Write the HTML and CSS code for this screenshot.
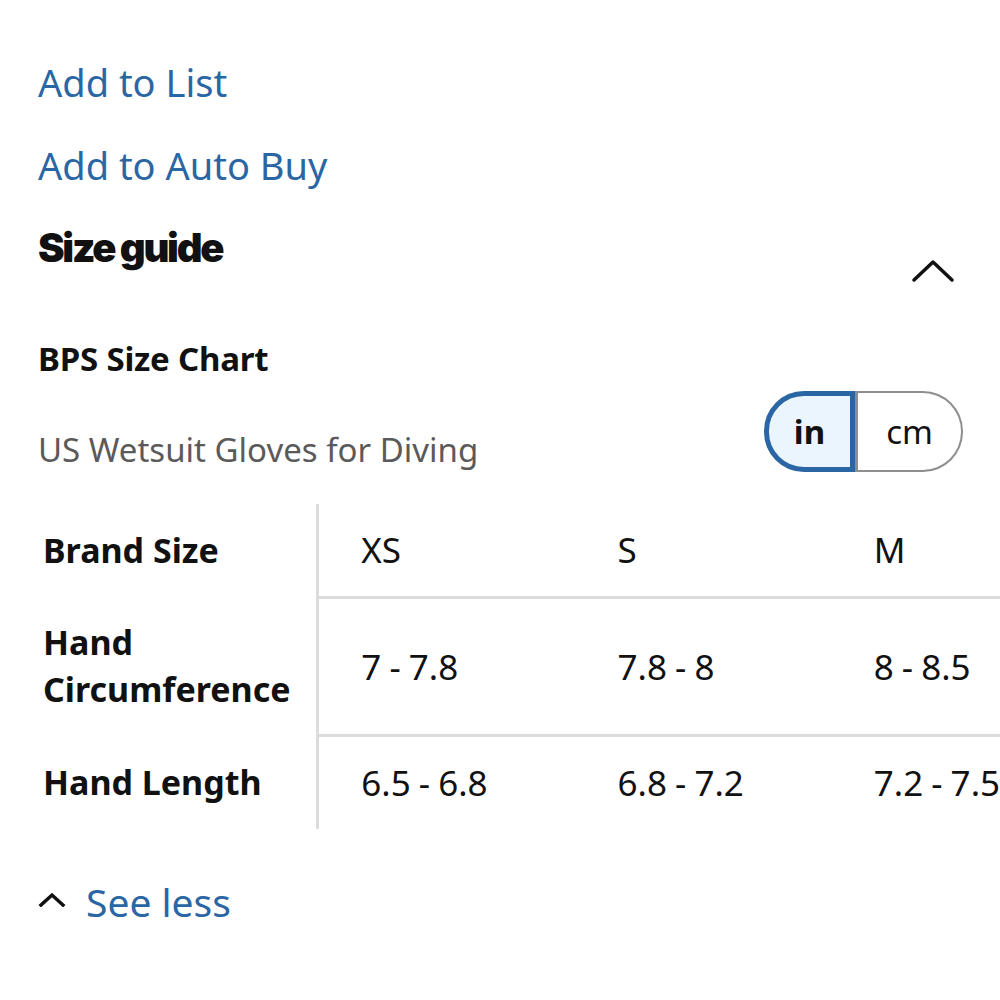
FILE: index.html
```html
<!DOCTYPE html>
<html lang="en">
<head>
<meta charset="utf-8">
<title>Size guide</title>
<link rel="stylesheet" href="styles.css">
</head>
<body>
<main class="page">
  <div class="actions">
    <a class="link" href="#">Add to List</a>
    <a class="link" href="#">Add to Auto Buy</a>
  </div>
  <section class="guide">
    <div class="guide-head">
      <h2 class="guide-title">Size guide</h2>
      <svg class="chev-up" viewBox="0 0 44 26" width="44" height="26" aria-hidden="true"><path d="M3 23 L22 5 L41 23" fill="none" stroke="#111" stroke-width="3.5" stroke-linecap="round" stroke-linejoin="round"/></svg>
    </div>
    <h3 class="chart-title">BPS Size Chart</h3>
    <div class="sub-row">
      <p class="chart-sub">US Wetsuit Gloves for Diving</p>
      <div class="toggle">
        <button class="tg tg-on">in</button>
        <button class="tg tg-off">cm</button>
      </div>
    </div>
    <div class="table-wrap">
      <table class="sizes">
        <tbody>
          <tr class="r1">
            <th>Brand Size</th>
            <td>XS</td><td>S</td><td>M</td>
          </tr>
          <tr class="r2">
            <th>Hand<br>Circumference</th>
            <td>7 - 7.8</td><td>7.8 - 8</td><td>8 - 8.5</td>
          </tr>
          <tr class="r3">
            <th>Hand Length</th>
            <td>6.5 - 6.8</td><td>6.8 - 7.2</td><td>7.2 - 7.5</td>
          </tr>
        </tbody>
      </table>
    </div>
    <a class="see-less" href="#">
      <svg class="chev-small" viewBox="0 0 28 16" width="28" height="16" aria-hidden="true"><path d="M3 14 L14 4 L25 14" fill="none" stroke="#111" stroke-width="3.5" stroke-linecap="square"/></svg>
      <span>See less</span>
    </a>
  </section>
</main>
</body>
</html>
```

FILE: styles.css
```css
html, body {
  margin: 0;
  padding: 0;
  background: #fff;
}
body {
  font-family: "Noto Sans", "Open Sans", sans-serif;
  color: #111;
  width: 1000px;
  overflow: hidden;
}
.page {
  padding: 57px 37px 0 38px;
}
.actions {
  display: flex;
  flex-direction: column;
  gap: 33px;
}
.link {
  color: #2a66a3;
  text-decoration: none;
  font-size: 38px;
  line-height: 50px;
  align-self: flex-start;
}
.guide-head {
  display: flex;
  justify-content: space-between;
  align-items: flex-start;
  margin-top: 33px;
}
.guide-title {
  margin: 0;
  font-family: "Inter", sans-serif;
  font-weight: 900;
  font-size: 40px;
  letter-spacing: -2.3px;
  line-height: 50px;
}
.chev-up {
  margin-top: 34px;
  margin-right: 8px;
}
.chart-title {
  margin: 54px 0 0;
  font-size: 33px;
  font-weight: 700;
  line-height: 44px;
  letter-spacing: -0.2px;
}
.sub-row {
  display: flex;
  justify-content: space-between;
  align-items: flex-end;
  margin-top: 10px;
}
.chart-sub {
  margin: 0;
  font-size: 33px;
  color: #5a5a5a;
  line-height: 44px;
}
.toggle {
  display: flex;
  height: 81px;
}
.tg {
  font-family: "Noto Sans", sans-serif;
  font-size: 33px;
  color: #111;
  margin: 0;
  padding: 0;
  cursor: pointer;
}
.tg-on {
  width: 91px;
  background: #eaf5fd;
  border: 5px solid #2a66a3;
  border-radius: 40px 0 0 40px;
  font-weight: 700;
}
.tg-off {
  width: 108px;
  background: #fff;
  border: 2px solid #8e8e8e;
  border-left: 3px solid #8e8e8e;
  border-radius: 0 40px 40px 0;
  font-weight: 400;
}
.table-wrap {
  margin-top: 32px;
  margin-right: -37px;
  overflow: hidden;
}
.sizes {
  border-collapse: collapse;
  table-layout: fixed;
  width: 1050px;
}
.sizes th, .sizes td {
  text-align: left;
  vertical-align: middle;
  padding: 0;
  line-height: 47px;
}
.sizes th {
  width: 273px;
  padding-left: 5px;
  font-size: 34px;
  font-weight: 700;
  border-right: 3px solid #dcdcdc;
}
.sizes td {
  width: 214px;
  padding-left: 42px;
  font-size: 35px;
  word-spacing: -1px;
  font-weight: 400;
}
.sizes tr + tr td {
  border-top: 3px solid #dcdcdc;
}
.r1 { height: 93px; }
.r2 { height: 138px; }
.r3 { height: 94px; }
.see-less {
  display: inline-flex;
  align-items: center;
  gap: 20px;
  margin-top: 48px;
  text-decoration: none;
  color: #2a66a3;
  font-size: 39px;
  line-height: 50px;
}
.chev-small {
  margin-top: -6px;
}
```
